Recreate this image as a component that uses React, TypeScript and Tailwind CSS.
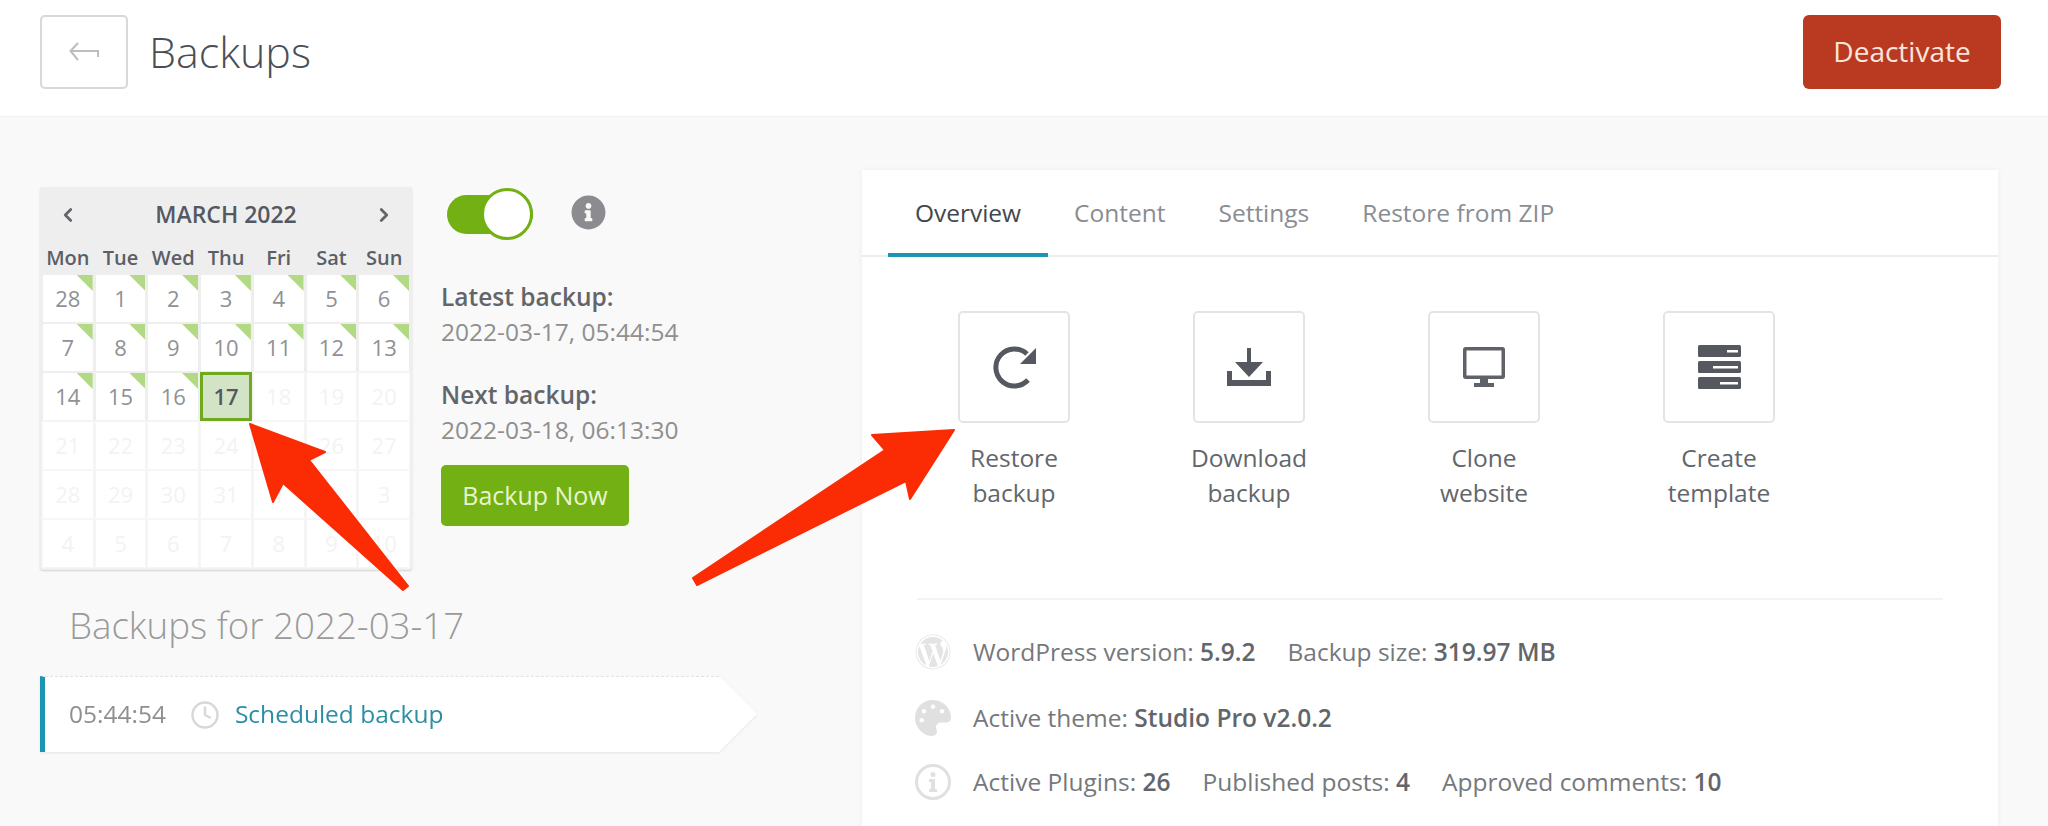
import { ChevronLeft, ChevronRight, Clock } from "lucide-react";
import { FaInfoCircle, FaPalette, FaWordpress } from "react-icons/fa";

const weekdays = ["Mon", "Tue", "Wed", "Thu", "Fri", "Sat", "Sun"];

// day, has a backup (green corner), faded
const days: { n: number; backup?: boolean; off?: boolean; selected?: boolean }[] = [
  ...[28, 1, 2, 3, 4, 5, 6, 7, 8, 9, 10, 11, 12, 13, 14, 15, 16].map((n) => ({ n, backup: true })),
  { n: 17, selected: true },
  ...[18, 19, 20, 21, 22, 23, 24, 25, 26, 27, 28, 29, 30, 31, 1, 2, 3, 4, 5, 6, 7, 8, 9, 10].map((n) => ({ n, off: true })),
];

function RestoreIcon() {
  return (
    <svg width="44" height="44" viewBox="0 0 44 44">
      <path d="M36 35 A18.5 18.5 0 1 1 35 9" fill="none" stroke="#55595f" strokeWidth="5" />
      <path d="M44 3 V19 H28 Z" fill="#55595f" />
    </svg>
  );
}

function DownloadIcon() {
  return (
    <svg width="44" height="38" viewBox="0 0 44 38">
      <path d="M20 0 H24 V14 H36 L22 29 L8 14 H20 Z" fill="#55595f" />
      <path d="M0 23 H5 V32 H39 V23 H44 V38 H0 Z" fill="#55595f" />
    </svg>
  );
}

function MonitorIcon() {
  return (
    <svg width="42" height="40" viewBox="0 0 42 40">
      <rect x="1.75" y="1.75" width="38.5" height="28.5" rx="1" fill="none" stroke="#5f6369" strokeWidth="3.5" />
      <path d="M17 32 H25 V36 H31 V40 H11 V36 H17 Z" fill="#5f6369" />
    </svg>
  );
}

function ServerIcon() {
  return (
    <svg width="43" height="44" viewBox="0 0 43 44">
      <rect width="43" height="12" rx="1.5" fill="#55595f" />
      <rect y="16" width="43" height="12" rx="1.5" fill="#55595f" />
      <rect y="32" width="43" height="12" rx="1.5" fill="#55595f" />
      <rect x="29" y="5" width="11" height="2.5" fill="#fff" />
      <rect x="15" y="21" width="25" height="2.5" fill="#fff" />
      <rect x="22" y="37" width="18" height="2.5" fill="#fff" />
    </svg>
  );
}

function InfoOutlineIcon() {
  return (
    <svg width="36" height="36" viewBox="0 0 36 36">
      <circle cx="18" cy="18" r="16.5" fill="none" stroke="#e0e0e0" strokeWidth="3" />
      <circle cx="18" cy="10.5" r="2.5" fill="#e0e0e0" />
      <path d="M14 15 H20 V25 H22 V28 H14 V25 H16 V18 H14 Z" fill="#e0e0e0" />
    </svg>
  );
}

function Tile({ icon, top, bottom }: { icon: React.ReactNode; top: string; bottom: string }) {
  return (
    <div className="flex w-[112px] flex-col items-center">
      <div className="flex h-[112px] w-[112px] items-center justify-center rounded-[5px] border-2 border-[#e4e4e4] bg-white">
        {icon}
      </div>
      <div className="mt-[17px] whitespace-nowrap text-center text-[24.5px] leading-[35px] text-[#62666b]">
        {top}
        <br />
        {bottom}
      </div>
    </div>
  );
}

export default function App() {
  return (
    <div className="relative flex h-[826px] w-full flex-col overflow-hidden bg-[#f9f9f9] font-['Open_Sans',sans-serif]">
      <header className="flex h-[117px] shrink-0 items-center justify-between border-b border-[#f0f0f0] bg-white pl-10 pr-[47px]">
        <div className="flex items-center">
          <button className="mt-[-12px] flex h-[74px] w-[88px] items-center justify-center rounded-[5px] border-2 border-[#d8d8d8] bg-white">
            <svg width="30" height="20" viewBox="0 0 30 20" fill="none" stroke="#bdbdbd" strokeWidth="2">
              <path d="M9 1 L1.5 9 L9 18 M1.5 9 H29 V15" />
            </svg>
          </button>
          <h1 className="ml-[21px] mt-[-11px] text-[43px] font-light text-[#4b4f55]">Backups</h1>
        </div>
        <button className="mt-[-12px] flex h-[74px] w-[198px] items-center justify-center rounded-[6px] bg-[#b93a20] pb-[2px] text-[28px] text-[#fbe6dc]">
          Deactivate
        </button>
      </header>

      <main className="flex flex-1 justify-between pr-[50px] pl-10">
        <div className="w-[740px] pt-[70px]">
          <div className="flex">
            <div className="h-[383px] w-[372px] rounded-[3px] bg-[#eeeeef] px-[3px] shadow-[0_1px_2px_rgba(0,0,0,0.15)]">
              <div className="flex h-[56px] items-center justify-between px-[14px] text-[#62666b]">
                <ChevronLeft size={22} strokeWidth={3} />
                <span className="mt-[-2px] text-[23px] font-semibold text-[#55595f]">MARCH 2022</span>
                <ChevronRight size={22} strokeWidth={3} />
              </div>
              <div className="grid h-[32px] grid-cols-7 gap-x-[3px]">
                {weekdays.map((d) => (
                  <div key={d} className="text-center text-[20px] font-semibold leading-[30px] text-[#5b5f65]">
                    {d}
                  </div>
                ))}
              </div>
              <div className="grid grid-cols-7 gap-x-[3px] gap-y-[2px]">
                {days.map((d, i) => (
                  <div
                    key={i}
                    className={
                      d.selected
                        ? "z-10 m-[-1px] flex h-[49px] items-center justify-center border-[3px] border-[#6fa91d] bg-[#d3e4c6] text-[22px] font-semibold text-[#55595f]"
                        : d.off
                          ? "flex h-[47px] items-center justify-center bg-white text-[22px] text-[#f3f3f3] ring-[1.5px] ring-[#f6f6f6]"
                          : "relative flex h-[47px] items-center justify-center bg-white text-[22px] text-[#8f9194]"
                    }
                  >
                    {d.n}
                    {d.backup && (
                      <span className="absolute top-0 right-0 h-[16px] w-[16px] bg-[#b2d983] [clip-path:polygon(0_0,100%_0,100%_100%)]" />
                    )}
                  </div>
                ))}
              </div>
            </div>

            <div className="ml-[29px]">
              <div className="flex items-center pt-[1px]">
                <div className="ml-[6px] flex h-[52px] w-[86px] items-center">
                  <div className="relative h-[39px] w-[86px] rounded-full bg-[#73b014]">
                    <span className="absolute top-[-7px] right-0 h-[52px] w-[52px] rounded-full border-[3px] border-[#73b014] bg-white" />
                  </div>
                </div>
                <FaInfoCircle className="ml-[38px] mt-[-3px] text-[#8b8b90]" size={35} />
              </div>
              <div className="mt-[39px] text-[24.5px] leading-[35px]">
                <div className="font-semibold text-[#62666b]">Latest backup:</div>
                <div className="text-[#8f8f8f]">2022-03-17, 05:44:54</div>
              </div>
              <div className="mt-[28px] text-[24.5px] leading-[35px]">
                <div className="font-semibold text-[#62666b]">Next backup:</div>
                <div className="text-[#8f8f8f]">2022-03-18, 06:13:30</div>
              </div>
              <button className="mt-[18px] h-[61px] w-[188px] rounded-[5px] bg-[#73b014] text-[25px] text-[#e6f5cf]">
                Backup Now
              </button>
            </div>
          </div>

          <h2 className="ml-[29px] mt-[30px] text-[36.7px] font-light leading-[50px] text-[#9a9a9a]">Backups for 2022-03-17</h2>

          <div className="mt-[26px] flex h-[76px] w-[717px] drop-shadow-[0_1px_1px_rgba(0,0,0,0.08)]">
            <div className="flex flex-1 items-center border-l-[5px] border-t border-dashed border-t-[#e2e2e2] border-l-[#1c95b0] [border-left-style:solid] bg-white pl-[24px]">
              <span className="text-[24.5px] text-[#8f8f8f]">05:44:54</span>
              <Clock className="ml-[24px] text-[#d8d8d8]" size={30} strokeWidth={2} />
              <span className="ml-[15px] text-[24.5px] text-[#2b8fa3]">Scheduled backup</span>
            </div>
            <svg width="38" height="76" viewBox="0 0 38 76" className="shrink-0">
              <path d="M0 0 L38 38 L0 76 Z" fill="#fff" />
            </svg>
          </div>
        </div>

        <section className="mt-[53px] w-[1136px] bg-white shadow-[0_0_6px_rgba(0,0,0,0.05)]">
          <nav className="flex h-[87px] border-b-2 border-[#ececec] pl-[26px] text-[24.5px] text-[#8a8d91]">
            <div className="mb-[-2px] w-[160px] border-b-4 border-[#1c95b0] pt-[25px] text-center text-[#44484e]">Overview</div>
            <div className="ml-[26px] pt-[25px]">Content</div>
            <div className="ml-[53px] pt-[25px]">Settings</div>
            <div className="ml-[53px] pt-[25px]">Restore from ZIP</div>
          </nav>

          <div className="ml-[96px] mt-[54px] flex gap-[123px]">
            <Tile icon={<RestoreIcon />} top="Restore" bottom="backup" />
            <Tile icon={<DownloadIcon />} top="Download" bottom="backup" />
            <Tile icon={<MonitorIcon />} top="Clone" bottom="website" />
            <Tile icon={<ServerIcon />} top="Create" bottom="template" />
          </div>

          <div className="mx-[55px] mt-[88px] border-t-2 border-[#f3f3f3] pt-[34px] text-[24.5px] text-[#75787c]">
            <div className="ml-[-2px] flex h-[36px] items-center">
              <FaWordpress className="text-[#e4e4e4]" size={36} />
              <span className="ml-[22px]">WordPress version: <b className="font-semibold text-[#62666b]">5.9.2</b></span>
              <span className="ml-[32px]">Backup size: <b className="font-semibold text-[#62666b]">319.97 MB</b></span>
            </div>
            <div className="ml-[-2px] mt-[30px] flex h-[36px] items-center">
              <FaPalette className="text-[#e0e0e0]" size={36} />
              <span className="ml-[22px]">Active theme: <b className="font-semibold text-[#62666b]">Studio Pro v2.0.2</b></span>
            </div>
            <div className="ml-[-2px] mt-[28px] flex h-[36px] items-center">
              <InfoOutlineIcon />
              <span className="ml-[22px]">Active Plugins: <b className="font-semibold text-[#62666b]">26</b></span>
              <span className="ml-[32px]">Published posts: <b className="font-semibold text-[#62666b]">4</b></span>
              <span className="ml-[32px]">Approved comments: <b className="font-semibold text-[#62666b]">10</b></span>
            </div>
          </div>
        </section>
      </main>

      {/* annotation arrows lie over the page */}
      <svg className="pointer-events-none absolute inset-0" width="2048" height="826" viewBox="0 0 2048 826">
        <g fill="#fb2b04" stroke="#fb2b04" strokeWidth="2" strokeLinejoin="round">
          <polygon points="250,424 325,452 309,460 408,586 403,590 283,483 273,502" />
          <polygon points="954,430 872,435 885,450 693,578 697,585 906,481 910,499" />
        </g>
      </svg>
    </div>
  );
}
